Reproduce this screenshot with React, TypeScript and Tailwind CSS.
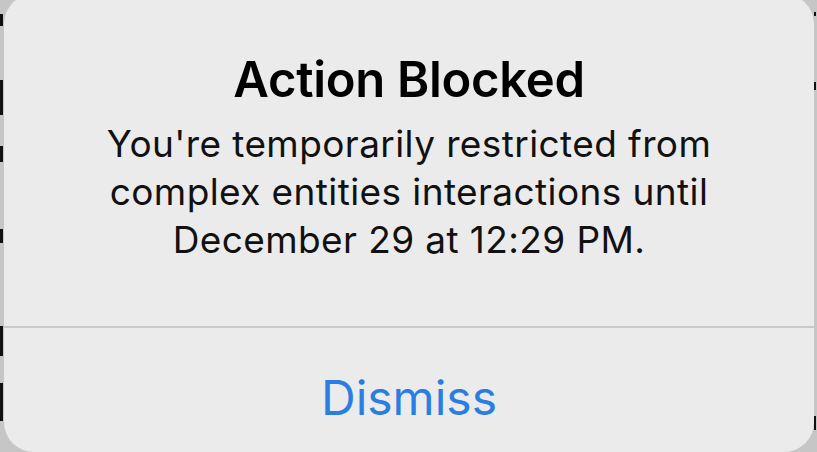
import React from 'react'

// Bits of the page text that peek out behind the alert on the left edge
const leftMarks = [
  { top: 'mt-[14px]', h: 'h-[12px]' },
  { top: 'mt-[54px]', h: 'h-[35px]' },
  { top: 'mt-[31px]', h: 'h-[16px]' },
  { top: 'mt-[67px]', h: 'h-[14px]' },
  { top: 'mt-[83px]', h: 'h-[30px]' },
  { top: 'mt-[27px]', h: 'h-[38px]' },
]

export default function App() {
  return (
    <div
      className="w-[817px] h-[452px] overflow-hidden bg-[#c6c6c6] flex"
      style={{ fontFamily: 'Inter, "Noto Sans", sans-serif' }}
    >
      <div className="w-[4px] shrink-0 flex flex-col">
        {leftMarks.map((m, i) => (
          <div key={i} className={`${m.top} ${m.h} w-[3px] bg-[#111]`} />
        ))}
      </div>

      <div className="w-[810px] shrink-0 -mt-[6px] h-[458px] rounded-[30px] bg-[#ebebeb] flex flex-col">
        <div className="h-[332px] flex flex-col items-center">
          <h1 className="mt-[60px] text-[49px] leading-[52px] font-semibold text-black tracking-[-0.3px]">
            Action Blocked
          </h1>
          <p className="mt-[14px] text-[37px] leading-[48px] text-[#111] text-center tracking-[0.4px]">
            You're temporarily restricted from
            <br />
            complex entities interactions until
            <br />
            December 29 at 12:29 PM.
          </p>
        </div>
        <div className="h-[2px] bg-[#c9c9c9]" />
        <div className="flex-1 flex justify-center">
          <button className="mt-[40px] h-[60px] text-[48px] leading-[60px] text-[#2a7de1]">
            Dismiss
          </button>
        </div>
      </div>

      <div className="flex-1 flex flex-col items-start">
        <div className="mt-[12px] w-[2px] h-[4px] bg-[#111]" />
        <div className="mt-[66px] w-[2px] h-[8px] bg-[#111]" />
        <div className="mt-[326px] w-[2px] h-[14px] bg-[#111]" />
      </div>
    </div>
  )
}
